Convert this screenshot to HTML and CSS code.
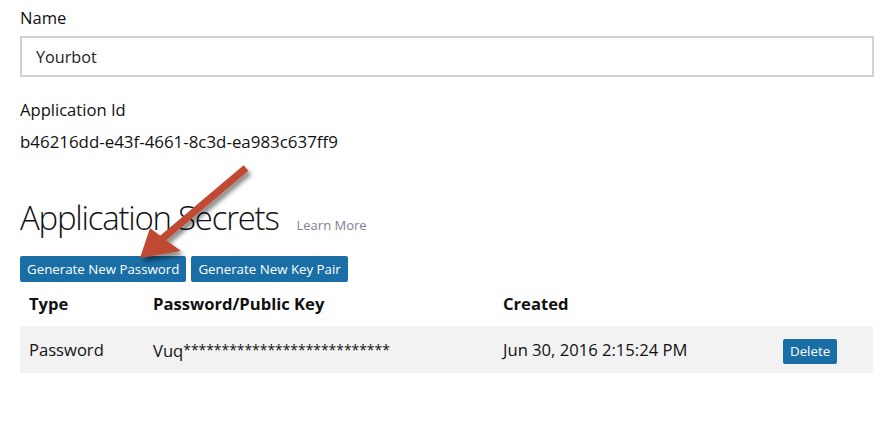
FILE: index.html
```html
<!DOCTYPE html>
<html>
<head>
<meta charset="utf-8">
<link rel="stylesheet" href="styles.css">
</head>
<body>
<div class="page">
  <div class="field-label first">Name</div>
  <input class="text-input" type="text" value="Yourbot">
  <div class="field-label appid">Application Id</div>
  <div class="field-value">b46216dd-e43f-4661-8c3d-ea983c637ff9</div>

  <div class="section-head">
    <h2 class="section-title">Application Secrets</h2>
    <a class="learn-more">Learn More</a>
  </div>
  <div class="btn-row">
    <button class="btn">Generate New Password</button>
    <button class="btn">Generate New Key Pair</button>
  </div>

  <div class="secrets">
    <div class="cell head">Type</div>
    <div class="cell head">Password/Public Key</div>
    <div class="cell head">Created</div>
    <div class="cell head"></div>
    <div class="cell body">Password</div>
    <div class="cell body">Vuq<span class="stars">***************************</span></div>
    <div class="cell body">Jun 30, 2016 2:15:24 PM</div>
    <div class="cell body action"><button class="btn btn-small">Delete</button></div>
  </div>

  <svg class="callout-arrow" width="896" height="426" viewBox="0 0 896 426">
    <defs>
      <filter id="sh" x="-20%" y="-20%" width="140%" height="140%">
        <feDropShadow dx="3" dy="4" stdDeviation="2.2" flood-color="#000" flood-opacity="0.45"/>
      </filter>
    </defs>
    <g filter="url(#sh)" fill="#bf4a31">
      <line x1="246" y1="168" x2="162" y2="239" stroke="#bf4a31" stroke-width="7.5" stroke-linecap="butt"/>
      <polygon points="140,258 150,228 163,238 181,251"/>
    </g>
  </svg>
</div>
</body>
</html>
```

FILE: styles.css
```css
html, body {
  margin: 0;
  padding: 0;
  background: #ffffff;
}
body {
  font-family: "Open Sans", "Noto Sans", sans-serif;
  color: #111111;
  font-size: 16.6px;
}
.page {
  position: relative;
  width: 854px;
  padding: 0 22px 0 20px;
  height: 426px;
  overflow: hidden;
}
.field-label {
  font-size: 16.6px;
  line-height: 22px;
}
.field-label.first {
  padding-top: 7px;
}
.text-input {
  display: block;
  box-sizing: border-box;
  width: 854px;
  height: 41px;
  margin: 7px 0 0 0;
  padding: 0 14px;
  border: 2px solid #d2d2d2;
  font-family: "Open Sans", "Noto Sans", sans-serif;
  font-size: 16.2px;
  color: #222222;
  background: #ffffff;
  outline: none;
}
.field-label.appid {
  margin-top: 22px;
}
.field-value {
  margin-top: 10px;
  font-size: 16.9px;
  line-height: 22px;
}
.section-head {
  display: flex;
  align-items: baseline;
  gap: 18px;
  margin-top: 44px;
}
.section-title {
  margin: 0;
  font-size: 33px;
  font-weight: 300;
  letter-spacing: -1.25px;
  line-height: 42px;
  color: #111111;
}
.learn-more {
  font-size: 13px;
  color: #7f8194;
}
.btn-row {
  display: flex;
  gap: 5px;
  margin-top: 17px;
}
.btn {
  height: 26px;
  padding: 0 7px;
  border: none;
  border-radius: 2px;
  background: #1a6ea6;
  color: #ffffff;
  font-family: "Open Sans", "Noto Sans", sans-serif;
  font-size: 13.3px;
  line-height: 26px;
}
.secrets {
  display: grid;
  grid-template-columns: 124px 350px 280px 99px;
  width: 853px;
}
.cell {
  padding-left: 9px;
  font-size: 16.6px;
}
.cell.head {
  font-weight: 700;
  line-height: 44px;
  height: 44px;
}
.cell.body {
  background: #f2f2f2;
  line-height: 47px;
  height: 47px;
}
.stars {
  font-size: 13.9px;
  vertical-align: 2px;
}
.cell.action {
  display: flex;
  align-items: center;
}
.btn-small {
  height: 25px;
  line-height: 25px;
  padding: 0 7px;
  margin-top: 4px;
}
.callout-arrow {
  position: absolute;
  left: 0;
  top: 0;
  pointer-events: none;
}
```
